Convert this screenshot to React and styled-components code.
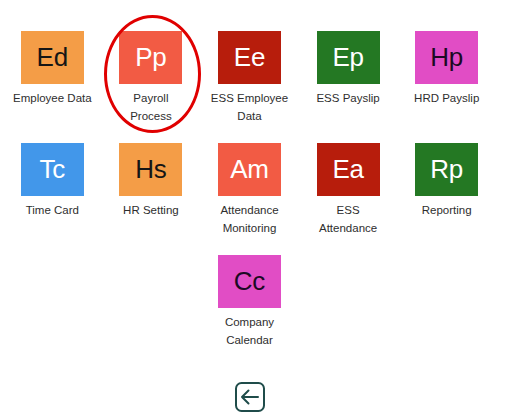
import React from 'react';
import styled, { createGlobalStyle } from 'styled-components';

const GlobalStyle = createGlobalStyle`
    body {
        margin: 0;
        background: #ffffff;
        font-family: "Liberation Sans", Arial, sans-serif;
    }
`;

const modules = [
    { code: 'Ed', label: ['Employee Data'], bg: '#f49d47', fg: '#151515' },
    { code: 'Pp', label: ['Payroll', 'Process'], bg: '#f25b44', fg: '#ffffff', circled: true },
    { code: 'Ee', label: ['ESS Employee', 'Data'], bg: '#b71d0c', fg: '#ffffff' },
    { code: 'Ep', label: ['ESS Payslip'], bg: '#247823', fg: '#ffffff' },
    { code: 'Hp', label: ['HRD Payslip'], bg: '#e14dc5', fg: '#1c0a24' },
    { code: 'Tc', label: ['Time Card'], bg: '#4297ea', fg: '#ffffff' },
    { code: 'Hs', label: ['HR Setting'], bg: '#f49d47', fg: '#151515' },
    { code: 'Am', label: ['Attendance', 'Monitoring'], bg: '#f25b44', fg: '#ffffff' },
    { code: 'Ea', label: ['ESS', 'Attendance'], bg: '#b71d0c', fg: '#ffffff' },
    { code: 'Rp', label: ['Reporting'], bg: '#247823', fg: '#ffffff' },
    { code: 'Cc', label: ['Company', 'Calendar'], bg: '#e14dc5', fg: '#1c0a24' },
];

function App() {
    return (
        <>
            <GlobalStyle />
            <Page>
                <Column>
                    <Grid>
                        {modules.map(m => (
                            <Item key={m.code}>
                                <Tile bg={m.bg} fg={m.fg}>{m.code}</Tile>
                                <Label>
                                    {m.label.map(line => <span key={line}>{line}</span>)}
                                </Label>
                                {m.circled && <Circle />}
                            </Item>
                        ))}
                    </Grid>
                    <BackButton aria-label="Back">
                        <svg width="30" height="30" viewBox="0 0 30 30" fill="none">
                            <rect x="1" y="1" width="28" height="28" rx="5.5" stroke="#1f4c4a" strokeWidth="2" />
                            <path d="M7 15h16M7 15l6.5-6.5M7 15l6.5 6.5" stroke="#1f4c4a" strokeWidth="2" strokeLinecap="round" strokeLinejoin="round" />
                        </svg>
                    </BackButton>
                </Column>
            </Page>
        </>
    );
}

export default App;

const Page = styled.div`
    width: 508px;
    height: 419px;
    padding-top: 31px;
    box-sizing: border-box;
`;

const Column = styled.div`
    width: 493px;
    margin-left: 3px;
    display: flex;
    flex-direction: column;
    align-items: center;
`;

const Grid = styled.div`
    width: 100%;
    display: flex;
    flex-wrap: wrap;
    justify-content: center;
    row-gap: 18px;
`;

const Item = styled.div`
    position: relative;
    width: 98.6px;
    height: 94px;
    display: flex;
    flex-direction: column;
    align-items: center;
`;

const Tile = styled.div`
    width: 63px;
    height: 53px;
    background: ${props => props.bg};
    color: ${props => props.fg};
    font-size: 26px;
    display: flex;
    align-items: center;
    justify-content: center;
    letter-spacing: -0.2px;
`;

const Label = styled.div`
    margin-top: 5px;
    display: flex;
    flex-direction: column;
    align-items: center;
    font-size: 11.5px;
    line-height: 18px;
    color: #2e2e2e;
    text-align: center;
    white-space: nowrap;
`;

const Circle = styled.div`
    position: absolute;
    left: 2px;
    top: -16px;
    width: 97px;
    height: 118px;
    border: 3.5px solid #e00000;
    border-radius: 50%;
    box-sizing: border-box;
`;

const BackButton = styled.button`
    margin-top: 33px;
    padding: 0;
    border: none;
    background: none;
    width: 30px;
    height: 30px;
    cursor: pointer;
    display: flex;
`;
